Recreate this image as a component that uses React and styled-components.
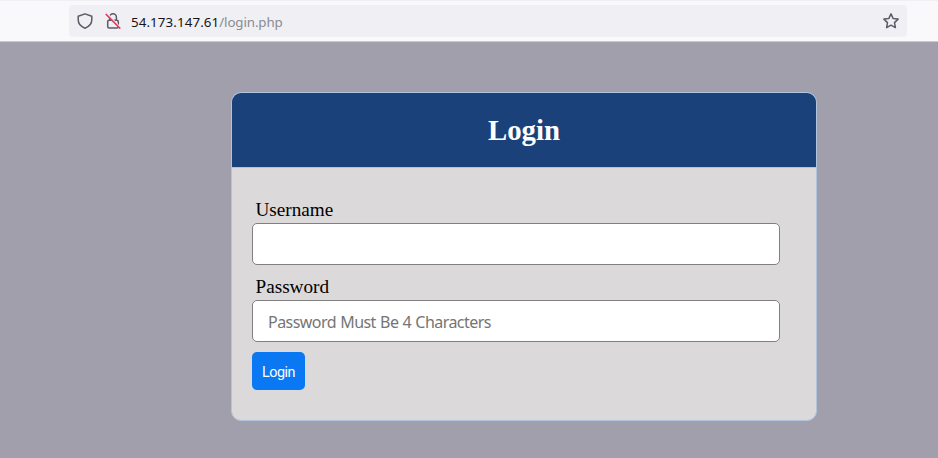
import React from "react";
import styled, { createGlobalStyle } from "styled-components";

const GlobalStyle = createGlobalStyle`
  * { box-sizing: border-box; }
  body {
    margin: 0;
    background: #a09fab;
    font-family: "Liberation Serif", "Times New Roman", serif;
    overflow: hidden;
  }
`;

const Page = styled.div`
  display: flex;
  flex-direction: column;
  height: 458px;
`;

const Toolbar = styled.header`
  height: 42px;
  padding: 4px 31px 4px 69px;
  background: #f9f9fb;
  border-top: 1px solid #f0f0f4;
  border-bottom: 1px solid #cac9d1;
`;

const AddressBar = styled.div`
  display: flex;
  align-items: center;
  height: 32px;
  padding: 0 8px;
  border-radius: 4px;
  background: #f0f0f4;
`;

const Icon = styled.svg`
  width: 16px;
  height: 16px;
  flex: none;
  margin-right: ${(p) => p.$gap || 0}px;
  fill: none;
  stroke: #5b5b66;
  stroke-width: 1.5;
  stroke-linecap: round;
  stroke-linejoin: round;
`;

const Url = styled.div`
  flex: 1;
  color: #8a8a91;
  font: 13.33px/20px "Noto Sans", sans-serif;
  letter-spacing: -0.12px;
  padding-top: 1px;
`;

const Host = styled.span`
  color: #15141a;
  letter-spacing: 0.1px;
`;

const Card = styled.main`
  width: 586px;
  margin: 50px 0 0 231px;
`;

const CardHeader = styled.div`
  display: flex;
  align-items: center;
  justify-content: center;
  height: 75px;
  background: #1b417a;
  border: 1px solid #b0c4de;
  border-bottom: 0;
  border-radius: 10px 10px 0 0;
`;

const Title = styled.h2`
  margin: 0;
  color: #fff;
  font-size: 28.8px;
  line-height: 33px;
`;

const Form = styled.form`
  height: 254px;
  padding: 30px 36px 30px 20px;
  background: #dbd9da;
  border: 1px solid #b0c4de;
  border-radius: 0 0 10px 10px;
`;

const Field = styled.div`
  display: flex;
  flex-direction: column;
  height: 67px;
  margin-bottom: 10px;
`;

const Label = styled.label`
  height: 25px;
  padding: 0 0 0 3.5px;
  color: #000;
  font-size: 19.2px;
  line-height: 23px;
`;

const Input = styled.input`
  width: 528px;
  height: 42px;
  padding: 3px 15px 1px;
  border: 1px solid #808080;
  border-radius: 5px;
  background: #fff;
  font: 16px "Noto Sans", sans-serif;
  letter-spacing: -0.55px;
  word-spacing: 0.6px;
  outline: 0;
  &::placeholder { color: #757575; opacity: 1; }
`;

const Button = styled.button`
  display: block;
  width: 53px;
  height: 38px;
  padding: 2px 0 0;
  border: 0;
  border-radius: 5px;
  background: #0a78f3;
  color: #fff;
  font: 14.4px Roboto, sans-serif;
  letter-spacing: -0.5px;
`;

export default function App() {
  return (
    <>
      <GlobalStyle />
      <Page>
        <Toolbar>
          <AddressBar>
            <Icon $gap={12} viewBox="0 0 16 16">
              <path d="M8 .9 14.8 3.3V6.8C14.8 10.6 12.3 13.6 8 15.2 3.7 13.6 1.2 10.6 1.2 6.8V3.3Z" />
            </Icon>
            <Icon $gap={10} viewBox="0 0 16 16">
              <path d="M4.6 7.3V4.2a3.4 3.4 0 0 1 6.8 0v3.1M2.7 8.3v5.2q0 1.5 1.5 1.5h7.6q1.5 0 1.5-1.5V8.8q0-1.5-1.5-1.5H4.2q-1.5 0-1.5 1.5" />
              <path d="m2.1 .4 13 13.8" stroke="#f0f0f4" strokeWidth="1.4" />
              <path d="m1.2 1.4 13.6 13.7" stroke="#e83a5e" />
            </Icon>
            <Url><Host>54.173.147.61</Host>/login.php</Url>
            <Icon viewBox="0 0 16 16">
              <path d="m8 .9 2.1 4.5 5 .7-3.6 3.5.9 5-4.4-2.4-4.4 2.4.9-5L.9 6.1l5-.7Z" />
            </Icon>
          </AddressBar>
        </Toolbar>
        <Card>
          <CardHeader><Title>Login</Title></CardHeader>
          <Form onSubmit={(e) => e.preventDefault()}>
            <Field>
              <Label htmlFor="username">Username</Label>
              <Input id="username" type="text" />
            </Field>
            <Field>
              <Label htmlFor="password">Password</Label>
              <Input id="password" type="password" placeholder="Password Must Be 4 Characters" />
            </Field>
            <Button type="submit">Login</Button>
          </Form>
        </Card>
      </Page>
    </>
  );
}
